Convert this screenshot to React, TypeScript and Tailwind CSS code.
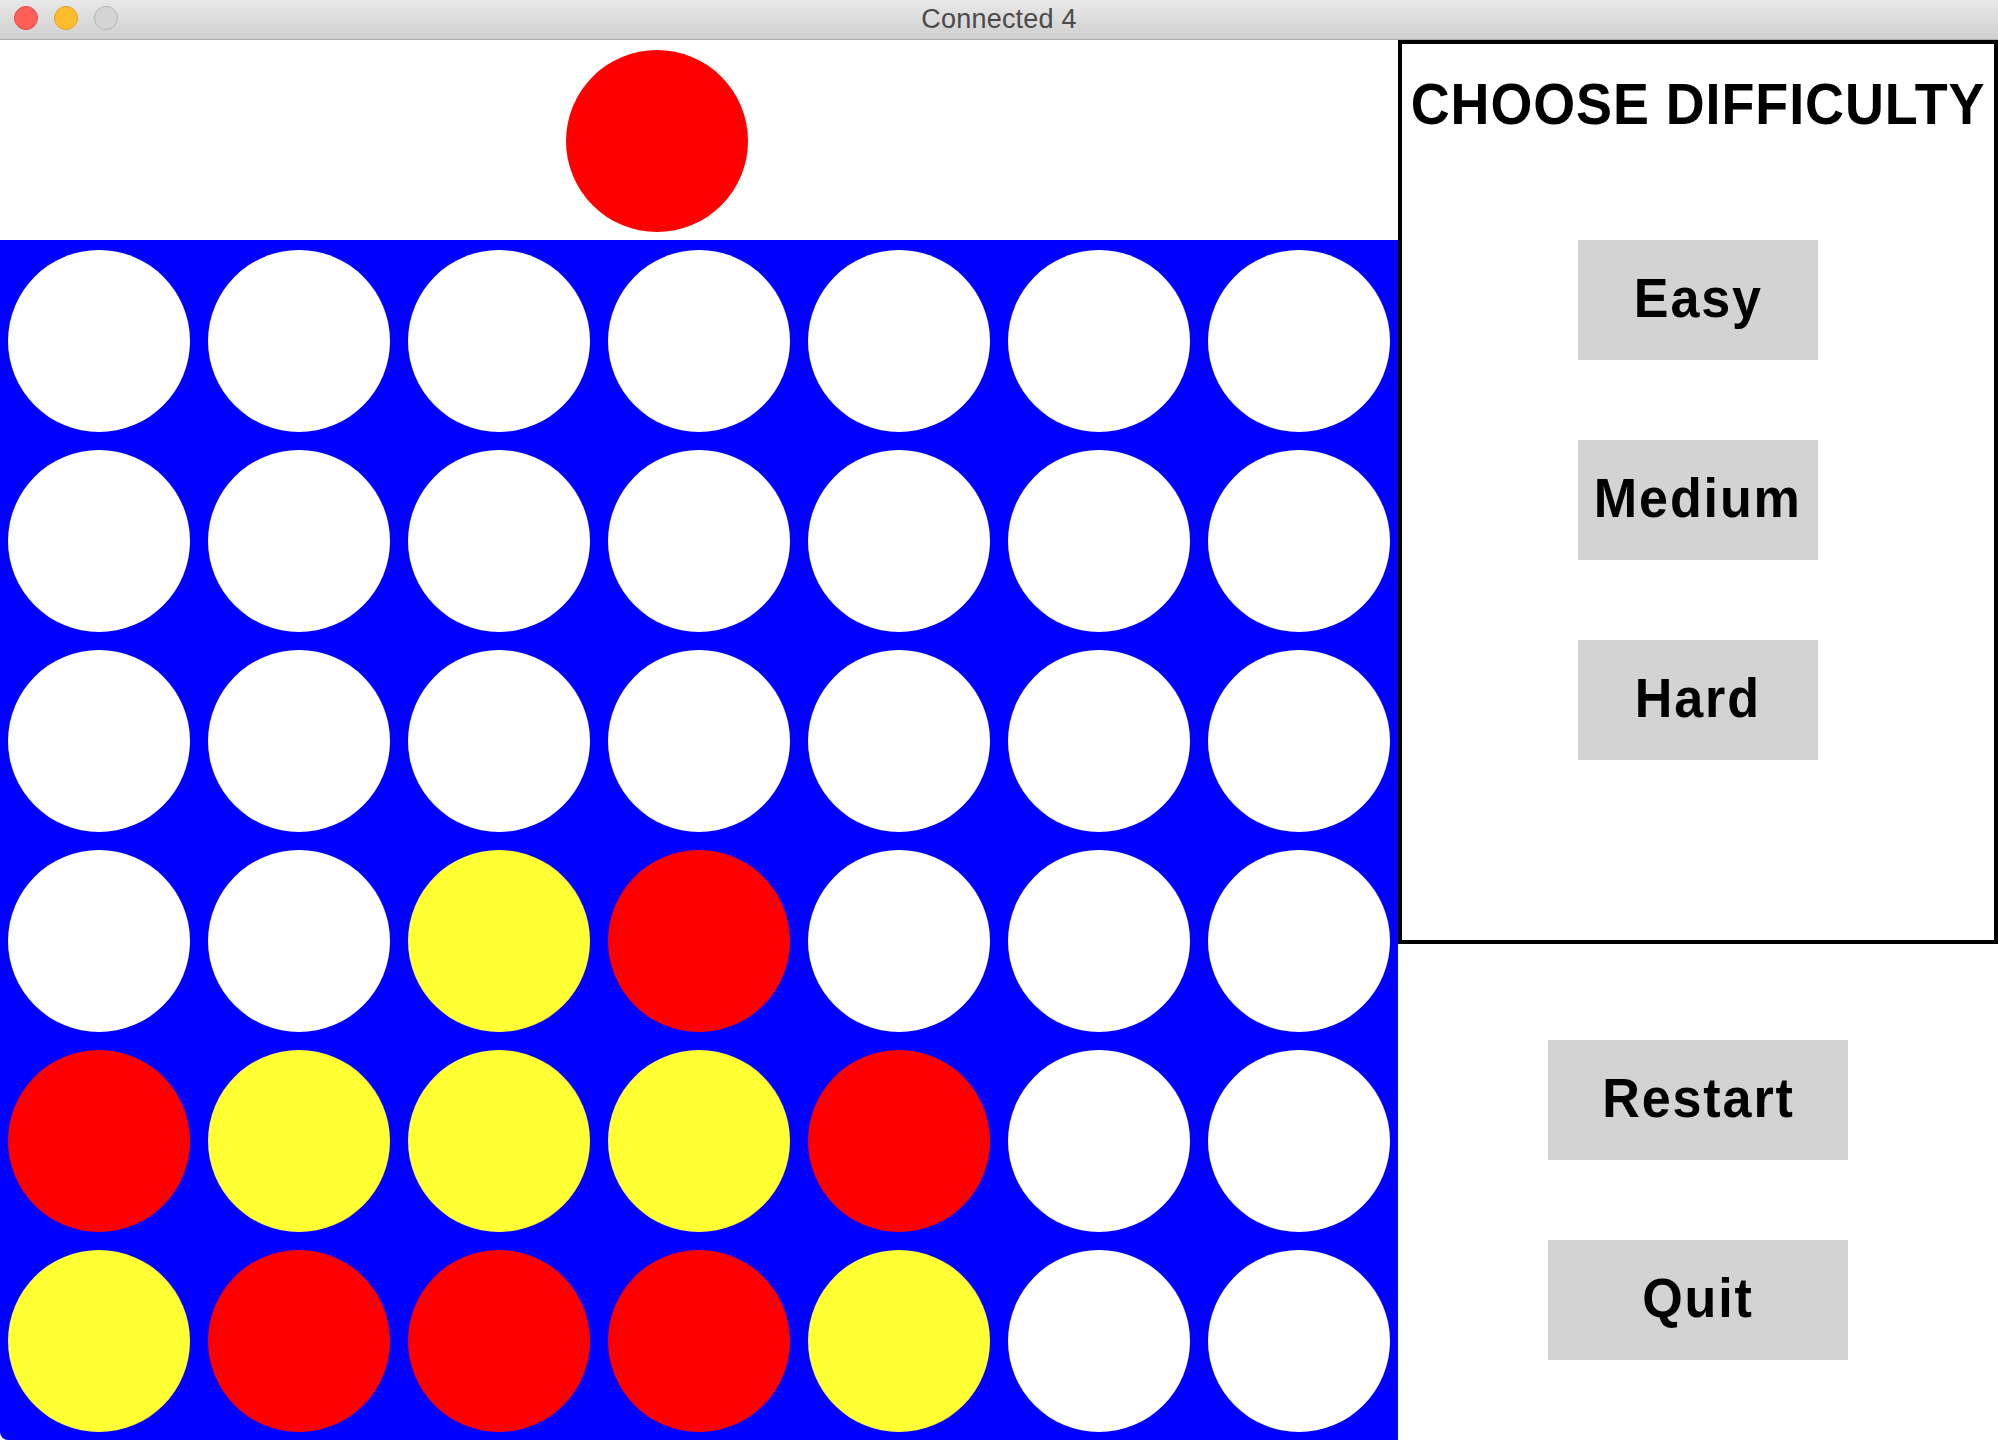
const board = [
  'wwwwwww',
  'wwwwwww',
  'wwwwwww',
  'wwyrwww',
  'ryyyrww',
  'yrrryww',
];

const discColor: Record<string, string> = {
  w: 'bg-white',
  r: 'bg-[#ff0000]',
  y: 'bg-[#ffff33]',
};

function Light({ className }: { className: string }) {
  return <div className={`h-6 w-6 rounded-full border ${className}`} />;
}

function GameButton({ label, wide }: { label: string; wide?: boolean }) {
  return (
    <button
      className={`flex h-[120px] items-center justify-center bg-[#d3d3d3] pb-[5px] text-[56px] font-bold text-black ${
        wide ? 'w-[300px]' : 'w-[240px]'
      }`}
    >
      <span className="inline-block scale-x-[0.93] tracking-[2px]">{label}</span>
    </button>
  );
}

export default function App() {
  return (
    <div className="flex h-[1440px] w-[1998px] flex-col overflow-hidden rounded-b-lg bg-white font-['Liberation_Sans',Arial,sans-serif]">
      <div className="relative flex h-10 items-center gap-4 border-b border-[#aeaeae] bg-gradient-to-b from-[#e8e8e8] to-[#cfcfcf] pb-1 pl-3.5">
        <Light className="border-[#e5484d] bg-[#ff5f57]" />
        <Light className="border-[#dfa023] bg-[#ffbd2e]" />
        <Light className="border-[#b5b5b5] bg-[#d4d4d4]" />
        <div className="absolute inset-x-0 top-0 pt-[3px] text-center text-[27px] leading-8 tracking-[0.2px] text-[#4a4a4a]">
          Connected 4
        </div>
      </div>

      <div className="flex flex-1">
        <div className="flex w-[1398px] flex-col">
          <div className="h-[200px] pl-[566px] pt-[10px]">
            <div className="h-[182px] w-[182px] rounded-full bg-[#ff0000]" />
          </div>
          <div className="grid flex-1 grid-cols-[repeat(7,182px)] content-start gap-[18px] bg-[#0000ff] pl-2 pt-2.5">
            {board.flatMap((row, r) =>
              row.split('').map((cell, c) => (
                <div key={`${r}-${c}`} className={`h-[182px] w-[182px] rounded-full ${discColor[cell]}`} />
              )),
            )}
          </div>
        </div>

        <div className="flex w-[600px] flex-col">
          <div className="flex h-[904px] flex-col items-center border-4 border-black">
            <h1 className="mb-[74px] flex h-[122px] items-center whitespace-nowrap text-[57px] font-bold text-black">
              <span className="inline-block scale-x-[0.945] tracking-[1px]">CHOOSE DIFFICULTY</span>
            </h1>
            <div className="flex flex-col gap-20">
              <GameButton label="Easy" />
              <GameButton label="Medium" />
              <GameButton label="Hard" />
            </div>
          </div>
          <div className="flex flex-col items-center gap-20 pt-[96px]">
            <GameButton label="Restart" wide />
            <GameButton label="Quit" wide />
          </div>
        </div>
      </div>
    </div>
  );
}
